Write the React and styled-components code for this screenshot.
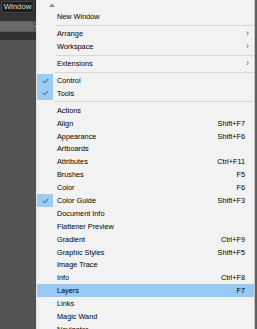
import React from "react";
import styled, { createGlobalStyle } from "styled-components";

const Global = createGlobalStyle`
  html, body {
    margin: 0;
    padding: 0;
    background: #535353;
  }
  body {
    font-family: "Liberation Sans", Arial, sans-serif;
  }
`;

const items = [
  { type: "sep" },
  { label: "Arrange", sub: true },
  { label: "Workspace", sub: true },
  { type: "sep" },
  { label: "Extensions", sub: true },
  { type: "sep" },
  { label: "Control", checked: true },
  { label: "Tools", checked: true },
  { type: "sep" },
  { label: "Actions" },
  { label: "Align", key: "Shift+F7" },
  { label: "Appearance", key: "Shift+F6" },
  { label: "Artboards" },
  { label: "Attributes", key: "Ctrl+F11" },
  { label: "Brushes", key: "F5" },
  { label: "Color", key: "F6" },
  { label: "Color Guide", key: "Shift+F3", checked: true },
  { label: "Document Info" },
  { label: "Flattener Preview" },
  { label: "Gradient", key: "Ctrl+F9" },
  { label: "Graphic Styles", key: "Shift+F5" },
  { label: "Image Trace" },
  { label: "Info", key: "Ctrl+F8" },
  { label: "Layers", key: "F7", active: true },
  { label: "Links" },
  { label: "Magic Wand" },
  { label: "Navigator" },
];

const Check = () => (
  <svg width="7" height="6" viewBox="0 0 7 6">
    <path d="M0.8 3.1 L2.6 4.8 L6.2 1" fill="none" stroke="#2d4a6e" strokeWidth="1" />
  </svg>
);

const App = () => {
  return (
    <>
      <Global />
      <Page>
        <Sidebar>
          <TabBar>
            <Tab>Window</Tab>
          </TabBar>
          <Gap />
          <FieldBar>
            <Field />
            <Tick />
          </FieldBar>
          <DarkStrip />
        </Sidebar>
        <Menu>
          <ScrollUp>
            <svg width="6" height="4" viewBox="0 0 6 4">
              <path d="M0 4 L3 0.5 L6 4 Z" fill="#8d8d8d" />
            </svg>
          </ScrollUp>
          <Item>
            <CheckCell />
            <Label>New Window</Label>
            <Shortcut />
          </Item>
          {items.map((item, i) =>
            item.type === "sep" ? (
              <Separator key={i} />
            ) : (
              <Item key={i} $active={item.active}>
                <CheckCell $checked={item.checked}>{item.checked && <Check />}</CheckCell>
                <Label>{item.label}</Label>
                {item.sub ? <SubArrow>›</SubArrow> : <Shortcut>{item.key}</Shortcut>}
              </Item>
            )
          )}
        </Menu>
        <Edge />
      </Page>
    </>
  );
};

const Page = styled.div`
  display: flex;
  width: 257px;
  height: 329px;
  overflow: hidden;
  background: #535353;
`;

const Sidebar = styled.div`
  width: 36px;
  flex-shrink: 0;
  display: flex;
  flex-direction: column;
  background: #535353;
`;

const TabBar = styled.div`
  height: 14px;
  background: #2c2c2c;
  padding: 1px 0 0 1px;
  box-sizing: border-box;
`;

const Tab = styled.div`
  width: 33px;
  height: 12px;
  box-sizing: border-box;
  border: 1px solid #474747;
  border-radius: 2px;
  background: #1f1f1f;
  color: #dcdcdc;
  font-size: 7.8px;
  line-height: 10px;
  text-align: center;
`;

const Gap = styled.div`
  height: 7px;
  background: #343434;
`;

const FieldBar = styled.div`
  height: 11px;
  background: #5a5a5a;
  display: flex;
  align-items: center;
`;

const Field = styled.div`
  width: 33px;
  height: 9px;
  background: #6a6a6a;
`;

const Tick = styled.div`
  width: 2px;
  height: 1px;
  margin-left: 1px;
  background: #9a9a9a;
`;

const DarkStrip = styled.div`
  height: 8px;
  background: #323232;
`;

const Menu = styled.div`
  width: 219px;
  flex-shrink: 0;
  background: #f2f2f2;
  border-left: 1px solid #e4e4e4;
  border-right: 1px solid #c8c8c8;
  box-sizing: border-box;
  display: flex;
  flex-direction: column;
`;

const ScrollUp = styled.div`
  height: 10.5px;
  flex-shrink: 0;
  display: flex;
  align-items: center;
  padding-left: 12px;
`;

const Item = styled.div`
  display: grid;
  grid-template-columns: 16px 1fr auto;
  align-items: center;
  height: 12.9px;
  flex-shrink: 0;
  background: ${(p) => (p.$active ? "#96c9f4" : "transparent")};
  color: #000;
  font-size: 7.3px;
`;

const CheckCell = styled.div`
  height: 100%;
  display: flex;
  align-items: center;
  justify-content: center;
  background: ${(p) => (p.$checked ? "#9acdf6" : "transparent")};
`;

const Label = styled.span`
  padding-left: 4px;
  white-space: nowrap;
`;

const Shortcut = styled.span`
  padding-right: 9px;
  white-space: nowrap;
`;

const SubArrow = styled.span`
  padding-right: 5px;
  font-size: 9px;
  line-height: 1;
  color: #555;
`;

const Separator = styled.div`
  height: 4px;
  flex-shrink: 0;
  margin-left: 18px;
  display: flex;
  align-items: center;
  &::after {
    content: "";
    flex: 1;
    height: 1px;
    background: #d7d7d7;
  }
`;

const Edge = styled.div`
  flex: 1;
  background: #5e5e5e;
`;

export default App;
